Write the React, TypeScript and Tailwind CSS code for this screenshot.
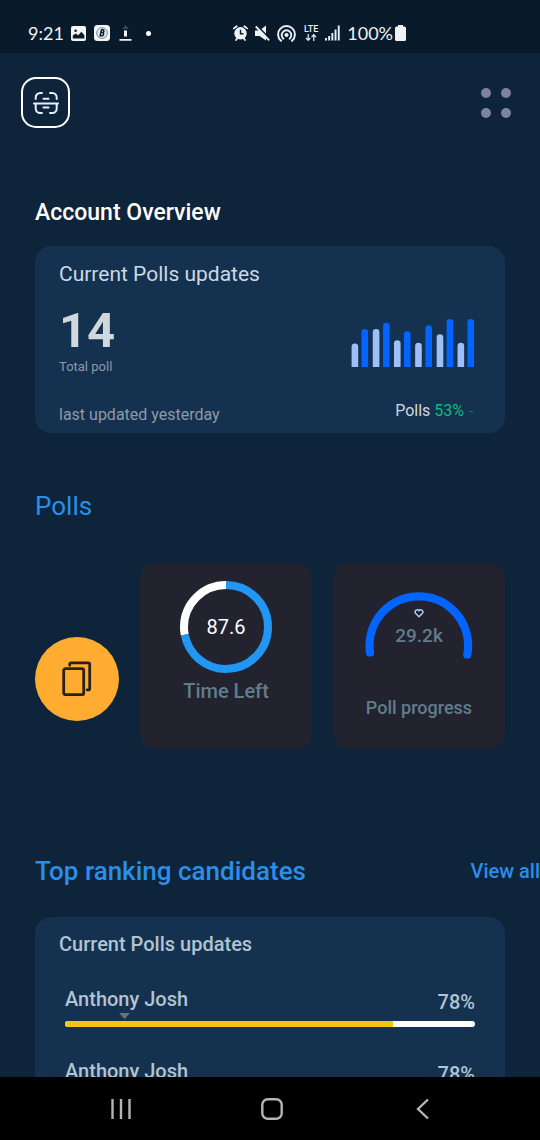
import React from "react";

const bars = [
  { x: 0, top: 74 },
  { x: 30, top: 30 },
  { x: 64, top: 30 },
  { x: 95, top: 11 },
  { x: 128, top: 64 },
  { x: 158, top: 37 },
  { x: 192, top: 72 },
  { x: 223, top: 19 },
  { x: 257, top: 46 },
  { x: 287, top: 0 },
  { x: 320, top: 72 },
  { x: 350, top: 0 },
];

const candidates = [
  { id: "a", name: "Anthony Josh", share: "78%", fill: 80 },
  { id: "b", name: "Anthony Josh", share: "78%", fill: 80 },
];

function StatusBar() {
  return (
    <div className="flex h-[53px] shrink-0 items-end bg-[#091a2b] pr-[134px] pb-2 pl-7 text-[#eef2f6]">
      <div className="flex h-6 flex-1 items-center">
        <span className="w-[43px] font-['Lato'] text-lg leading-6">9:21</span>
        <svg className="h-[15px] w-[15px]" viewBox="0 0 15 15" aria-hidden="true">
          <rect width="15" height="15" rx="2" fill="#f4f6f8" />
          <circle cx="4.6" cy="4.8" r="1.3" fill="#091a2b" />
          <path d="M1.8 12.5V9.6l2.8-2.2 2.6 1.9 3.2-3.5 3 3.4v3.3z" fill="#091a2b" />
        </svg>
        <svg className="ml-2 h-4 w-4" viewBox="0 0 16 16" aria-hidden="true">
          <rect width="16" height="16" rx="3.5" fill="#f4f6f8" />
          <circle cx="8" cy="8" r="5.4" fill="#dfe3e7" stroke="#7b848d" strokeWidth="0.9" />
          <path d="M7.2 4.8h1.600c1.400 0 1.500 2.300 0 2.700 1.300.500.900 3.200-.900 3.200H6.200l1.300-5.700" fill="none" stroke="#091a2b" strokeWidth="1.5" />
        </svg>
        <svg className="ml-[9px] h-4 w-[13px]" viewBox="0 0 13 16" aria-hidden="true">
          <path d="M6.5 0 10 4H3z" fill="#36475a" />
          <path d="M5 5.5h3v6H5zM.5 14h12v1.7H.5z" fill="currentColor" />
        </svg>
        <span className="ml-[14px] h-[5px] w-[5px] rounded-full bg-white" />
      </div>
      <div className="flex h-6 items-center">
        <svg className="h-4 w-[15px]" viewBox="0 0 15 16" aria-hidden="true">
          <circle cx="7.5" cy="8.3" r="6.2" fill="currentColor" />
          <path d="M.9 3.4 3.7 1.2M14.1 3.4 11.3 1.2M3 15l1.500-2M12 15l-1.500-2" stroke="currentColor" strokeWidth="1.8" strokeLinecap="round" />
          <path d="M7.5 4.8v4h3" fill="none" stroke="#091a2b" strokeWidth="1.4" />
        </svg>
        <svg className="ml-[7px] h-4 w-[15px]" viewBox="0 0 15 16" aria-hidden="true">
          <path d="M0 5.500h4.500L11 .5v15L4.500 11H0z" fill="currentColor" />
          <path d="M2 .7 15 14" stroke="#091a2b" strokeWidth="1.7" />
          <path d="M.8 1.5 14.2 15.3" stroke="currentColor" strokeWidth="1.9" />
        </svg>
        <svg className="ml-[7px] h-[17px] w-[19px]" viewBox="0 0 19 17" fill="none" stroke="currentColor" strokeWidth="1.9" strokeLinecap="round" aria-hidden="true">
          <circle cx="9.5" cy="10" r="2.1" fill="currentColor" stroke="none" />
          <path d="M6.3 13.7a4.8 4.8 0 1 1 6.4 0M4 15.8a8.4 8.4 0 1 1 11 0" />
        </svg>
        <span className="ml-[7px] flex w-4 flex-col items-center font-['Roboto']">
          <span className="text-[9px] leading-[9px] font-medium">LTE</span>
          <svg className="h-[7px] w-3" viewBox="0 0 12 7" fill="none" stroke="currentColor" strokeWidth="1.2" aria-hidden="true">
            <path d="M3.2 0v6M1 4l2.2 2.3L5.4 4M8.8 7V1M6.6 3l2.2-2.3L11 3" />
          </svg>
        </span>
        <svg className="ml-[6px] h-4 w-[15px]" viewBox="0 0 15 16" fill="currentColor" aria-hidden="true">
          <path d="M0 13h1.9v2.5H0zM3.2 11h1.9v4.5H3.2zM6.4 8h1.9v7.5H6.4zM9.6 4.5h1.9v11H9.6zM12.8.5h1.9v15h-1.9z" />
        </svg>
        <span className="ml-[7px] font-['Lato'] text-lg leading-6">100%</span>
        <svg className="ml-[2px] h-4 w-[11px]" viewBox="0 0 11 16" fill="currentColor" aria-hidden="true">
          <path d="M3 0h5v1.5h1.5A1.5 1.5 0 0 1 11 3v11.5a1.5 1.5 0 0 1-1.5 1.5h-8A1.5 1.5 0 0 1 0 14.5V3a1.5 1.5 0 0 1 1.5-1.5H3z" />
        </svg>
      </div>
    </div>
  );
}

function Header() {
  return (
    <header className="flex items-center justify-between pt-6 pr-[29px] pl-[21px]">
      <button type="button" aria-label="Scan" className="flex h-[51px] w-[49px] items-center justify-center rounded-[15px] border-2 border-white text-[#e4f1fa]">
        <svg className="h-[22px] w-[26px]" viewBox="0 0 26 22" fill="none" stroke="currentColor" strokeWidth="2" strokeLinecap="round" aria-hidden="true">
          <path d="M2.7 7V5.5A4.5 4.5 0 0 1 7.2 1H9M17 1h2.2a4.5 4.5 0 0 1 4.5 4.5V7M2.7 12v4.5A4.5 4.5 0 0 0 7.2 21H9M17 21h2.2a4.5 4.5 0 0 0 4.5-4.5V12" />
          <path d="M1 11.5h24M10.5 6.7h5M10.5 15.6h5" />
        </svg>
      </button>
      <button type="button" aria-label="Menu" className="grid grid-cols-2 gap-[10px]">
        <span className="h-[10px] w-[10px] rounded-full bg-[#7f83a3]" />
        <span className="h-[10px] w-[10px] rounded-full bg-[#7f83a3]" />
        <span className="h-[10px] w-[10px] rounded-full bg-[#7f83a3]" />
        <span className="h-[10px] w-[10px] rounded-full bg-[#7f83a3]" />
      </button>
    </header>
  );
}

function BarChart() {
  return (
    <svg className="h-12 w-[124px]" viewBox="0 0 371 145" role="img" aria-label="Polls per day">
      {bars.map((bar, i) => (
        <path
          key={bar.x}
          d={`M${bar.x} 145V${bar.top + 10}a10 10 0 0 1 20 0V145z`}
          fill={i % 2 === 0 ? "#9cc0fc" : "#0265ff"}
        />
      ))}
    </svg>
  );
}

function Overview() {
  return (
    <section className="px-[35px] pt-[71px]">
      <h1 className="text-[23px] leading-7 font-medium text-white">Account Overview</h1>
      <div className="mt-[19px] flex h-[187px] justify-between rounded-2xl bg-[#14314f] pr-[30px] pl-6">
        <div className="flex flex-col">
          <h2 className="pt-[14px] text-[21px] leading-7 text-[#cbd9e6]">Current Polls updates</h2>
          <p className="mt-[17px] text-[49px] leading-[52px] font-bold text-[#cfd8dc]">14</p>
          <p className="mt-[2px] text-[13px] leading-4 text-[#8d9ba9]">Total poll</p>
          <p className="mt-7 text-base leading-6 text-[#8d9ba9]">last updated yesterday</p>
        </div>
        <div className="flex flex-col items-end pt-[73px]">
          <BarChart />
          <p className="mt-8 flex items-center text-base leading-6 text-[#cfd8dc]">
            Polls&nbsp;<span className="text-[#10b981]">53%</span>
            <span className="mr-[2px] ml-[5px] h-px w-[4px] bg-[#27775f]" />
          </p>
        </div>
      </div>
    </section>
  );
}

function Polls() {
  return (
    <section className="px-[35px] pt-[55px]">
      <h2 className="text-[26px] leading-9 text-[#2a8fe8]">Polls</h2>
      <div className="mt-[39px] flex h-[186px] gap-[21px]">
        <button type="button" aria-label="Copy" className="mt-[74px] flex h-[84px] w-[84px] shrink-0 items-center justify-center rounded-full bg-[#ffac30] text-[#2b211b]">
          <svg className="h-9 w-[30px]" viewBox="0 0 30 36" fill="none" stroke="currentColor" strokeWidth="2.8" strokeLinecap="round" strokeLinejoin="round" aria-hidden="true">
            <rect x="1.7" y="7.7" width="20" height="26" rx="1.8" />
            <path d="M7.7 4.3V3.4a1.5 1.5 0 0 1 1.5-1.5h17A1.5 1.5 0 0 1 27.7 3.4v24a1.5 1.5 0 0 1-1.5 1.5h-1" />
          </svg>
        </button>
        <div className="flex flex-1 flex-col items-center rounded-2xl bg-[#22232f] pt-[18px]">
          <div className="grid place-items-center">
            <svg className="col-start-1 row-start-1 h-[92px] w-[92px] -rotate-90" viewBox="0 0 92 92" fill="none" strokeWidth="8" aria-hidden="true">
              <circle cx="46" cy="46" r="42" stroke="#ffffff" pathLength="100" strokeDasharray="28 72" strokeDashoffset="-72" />
              <circle cx="46" cy="46" r="42" stroke="#2196f3" pathLength="100" strokeDasharray="72 28" />
            </svg>
            <span className="col-start-1 row-start-1 text-xl leading-6 text-white">87.6</span>
          </div>
          <p className="mt-[6px] text-xl leading-6 font-medium text-[#607d8b]">Time Left</p>
        </div>
        <div className="flex flex-1 flex-col items-center rounded-2xl bg-[#22232f] pt-[29px] text-[#607d8b]">
          <div className="grid justify-items-center">
            <svg className="col-start-1 row-start-1 h-[68px] w-[108px]" viewBox="0 0 108 68" fill="none" aria-hidden="true">
              <path d="M5 60.5A49.3 49.3 0 1 1 102.3 62.5" stroke="#0265ff" strokeWidth="8.2" strokeLinecap="round" />
              <path d="M54 24.8 50.5 21.2a2.1 2.1 0 0 1 3.500-2.400 2.100 2.100 0 0 1 3.500 2.400z" stroke="#b4cdf8" strokeWidth="1.4" strokeLinejoin="round" />
            </svg>
            <span className="col-start-1 row-start-1 pt-8 text-[19px] leading-6 font-medium">29.2k</span>
          </div>
          <p className="mt-9 text-lg leading-6 font-medium">Poll progress</p>
        </div>
      </div>
    </section>
  );
}

function Ranking() {
  return (
    <section className="pt-[104px] pl-[35px]">
      <div className="flex items-center justify-between text-[#2a8fe8]">
        <h2 className="text-[26px] leading-9 font-medium">Top ranking candidates</h2>
        <a href="#candidates" className="text-xl leading-6 font-medium">View all</a>
      </div>
      <div id="candidates" className="mt-7 mr-[35px] rounded-2xl bg-[#14314f] px-[30px] pt-[15px] pb-6 text-xl leading-6 font-medium text-[#b0c4d2]">
        <h3 className="-ml-[6px]">Current Polls updates</h3>
        <ul className="mt-[31px] flex flex-col gap-8">
          {candidates.map((c) => (
            <li key={c.id}>
              <div className="flex justify-between">
                <span>{c.name}</span>
                <span className="pt-[3px]">{c.share}</span>
              </div>
              <div className="relative mt-[7px] h-[6px] rounded-full bg-white">
                <svg className="absolute -top-2 left-[54px] h-[6px] w-[11px]" viewBox="0 0 11 6" aria-hidden="true">
                  <path d="M0 0h11L5.5 6z" fill="#68727b" />
                </svg>
                <div className="h-full rounded-l-full bg-[#f8c414]" style={{ width: `${c.fill}%` }} />
              </div>
            </li>
          ))}
        </ul>
      </div>
    </section>
  );
}

function NavBar() {
  return (
    <nav aria-label="System" className="flex h-[63px] shrink-0 items-center justify-around bg-black pr-[41px] pl-[45px] text-[#b5b5b5]">
      <button type="button" aria-label="Recent apps">
        <svg className="h-[22px] w-[22px]" viewBox="0 0 22 22" stroke="currentColor" strokeWidth="2.4" aria-hidden="true">
          <path d="M2.5 1v20M11 1v20M19.5 1v20" />
        </svg>
      </button>
      <button type="button" aria-label="Home">
        <svg className="h-[22px] w-[22px]" viewBox="0 0 22 22" fill="none" stroke="currentColor" strokeWidth="2.4" aria-hidden="true">
          <rect x="1.3" y="1.3" width="19.4" height="19.4" rx="5.5" />
        </svg>
      </button>
      <button type="button" aria-label="Back">
        <svg className="h-[22px] w-[22px]" viewBox="0 0 22 22" fill="none" stroke="currentColor" strokeWidth="2.4" aria-hidden="true">
          <path d="M16 1.5 6 11l10 9.5" />
        </svg>
      </button>
    </nav>
  );
}

export default function App() {
  return (
    <div className="flex h-screen flex-col bg-[#0e243b] font-['Roboto',sans-serif]">
      <StatusBar />
      <main className="min-h-0 flex-1 overflow-y-auto [scrollbar-width:none]">
        <Header />
        <Overview />
        <Polls />
        <Ranking />
      </main>
      <NavBar />
    </div>
  );
}
